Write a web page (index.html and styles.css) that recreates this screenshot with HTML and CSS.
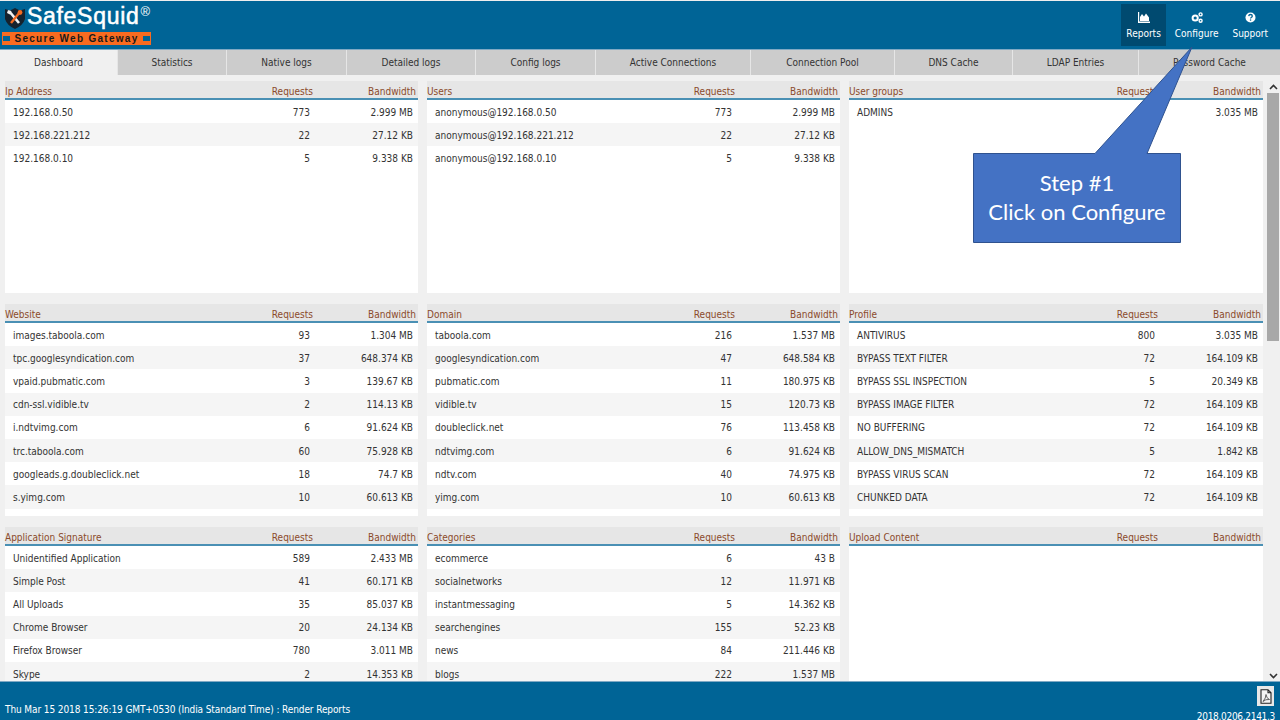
FILE: index.html
```html
<!DOCTYPE html>
<html>
<head>
<meta charset="utf-8">
<title>SafeSquid Reports</title>
<link rel="stylesheet" href="styles.css">
</head>
<body>

<div class="header">
  <div class="logo">
    <div class="logo-top">
      <svg class="shield" width="20" height="21" viewBox="0 0 20 21">
        <path d="M0 1 L5 2.500 L10 0 L15 2.500 L20 1 L20 11 Q18 17.500 10 21 Q2 17.500 0 11 Z" fill="#16222e"/>
        <path d="M4 3 L14 15" stroke="#f2f2f2" stroke-width="2.600"/>
        <path d="M3 2 L6.500 3.500 L5 6.500 L2 5 Z" fill="#f2f2f2"/>
        <path d="M15 4 L6 15" stroke="#f26a21" stroke-width="2.400"/>
        <circle cx="15" cy="4.500" r="2.400" fill="#f26a21"/>
      </svg>
      <span class="logo-name">SafeSquid</span><span class="logo-reg">&reg;</span>
    </div>
    <div class="logo-tag"><span class="tag-end"></span><span class="tag-text">Secure Web Gateway</span><span class="tag-end"></span></div>
  </div>
  <div class="topnav">
    <div class="topnav-item active">
      <svg width="12" height="11" viewBox="0 0 12 11"><path d="M0 0 H1.200 V9.600 H12 V11 H0 Z M2 9 V5 L4 2 L6 4.500 L8 1.500 L11 5.500 V9 Z" fill="#fff"/></svg>
      <span>Reports</span>
    </div>
    <div class="topnav-item">
      <svg width="12" height="11" viewBox="0 0 12 11"><circle cx="4.200" cy="6" r="2.600" fill="none" stroke="#fff" stroke-width="2"/><circle cx="9.600" cy="2.400" r="1.500" fill="none" stroke="#fff" stroke-width="1.400"/><circle cx="9.600" cy="8.800" r="1.500" fill="none" stroke="#fff" stroke-width="1.400"/></svg>
      <span>Configure</span>
    </div>
    <div class="topnav-item">
      <svg width="11" height="11" viewBox="0 0 11 11"><circle cx="5.500" cy="5.500" r="5" fill="#fff"/><path d="M3.700 4.200 Q3.900 2.500 5.500 2.500 Q7.300 2.500 7.300 4 Q7.300 5 6.200 5.500 Q5.600 5.800 5.600 6.600" fill="none" stroke="#006496" stroke-width="1.300"/><rect x="4.900" y="7.400" width="1.300" height="1.300" fill="#006496"/></svg>
      <span>Support</span>
    </div>
  </div>
</div>

<div class="tabs">
  <div class="tab active t1">Dashboard</div>
  <div class="tab t2">Statistics</div>
  <div class="tab t3">Native logs</div>
  <div class="tab t4">Detailed logs</div>
  <div class="tab t5">Config logs</div>
  <div class="tab t6">Active Connections</div>
  <div class="tab t7">Connection Pool</div>
  <div class="tab t8">DNS Cache</div>
  <div class="tab t9">LDAP Entries</div>
  <div class="tab t10">Password Cache</div>
</div>

<div class="content">
  <div class="panels">

    <div class="panel">
      <div class="row head"><span>Ip Address</span><span>Requests</span><span>Bandwidth</span></div>
      <div class="body">
        <div class="row"><span>192.168.0.50</span><span>773</span><span>2.999 MB</span></div>
        <div class="row"><span>192.168.221.212</span><span>22</span><span>27.12 KB</span></div>
        <div class="row"><span>192.168.0.10</span><span>5</span><span>9.338 KB</span></div>
      </div>
    </div>

    <div class="panel">
      <div class="row head"><span>Users</span><span>Requests</span><span>Bandwidth</span></div>
      <div class="body">
        <div class="row"><span>anonymous@192.168.0.50</span><span>773</span><span>2.999 MB</span></div>
        <div class="row"><span>anonymous@192.168.221.212</span><span>22</span><span>27.12 KB</span></div>
        <div class="row"><span>anonymous@192.168.0.10</span><span>5</span><span>9.338 KB</span></div>
      </div>
    </div>

    <div class="panel">
      <div class="row head"><span>User groups</span><span>Requests</span><span>Bandwidth</span></div>
      <div class="body">
        <div class="row"><span>ADMINS</span><span>800</span><span>3.035 MB</span></div>
      </div>
    </div>

    <div class="panel">
      <div class="row head"><span>Website</span><span>Requests</span><span>Bandwidth</span></div>
      <div class="body">
        <div class="row"><span>images.taboola.com</span><span>93</span><span>1.304 MB</span></div>
        <div class="row"><span>tpc.googlesyndication.com</span><span>37</span><span>648.374 KB</span></div>
        <div class="row"><span>vpaid.pubmatic.com</span><span>3</span><span>139.67 KB</span></div>
        <div class="row"><span>cdn-ssl.vidible.tv</span><span>2</span><span>114.13 KB</span></div>
        <div class="row"><span>i.ndtvimg.com</span><span>6</span><span>91.624 KB</span></div>
        <div class="row"><span>trc.taboola.com</span><span>60</span><span>75.928 KB</span></div>
        <div class="row"><span>googleads.g.doubleclick.net</span><span>18</span><span>74.7 KB</span></div>
        <div class="row"><span>s.yimg.com</span><span>10</span><span>60.613 KB</span></div>
      </div>
    </div>

    <div class="panel">
      <div class="row head"><span>Domain</span><span>Requests</span><span>Bandwidth</span></div>
      <div class="body">
        <div class="row"><span>taboola.com</span><span>216</span><span>1.537 MB</span></div>
        <div class="row"><span>googlesyndication.com</span><span>47</span><span>648.584 KB</span></div>
        <div class="row"><span>pubmatic.com</span><span>11</span><span>180.975 KB</span></div>
        <div class="row"><span>vidible.tv</span><span>15</span><span>120.73 KB</span></div>
        <div class="row"><span>doubleclick.net</span><span>76</span><span>113.458 KB</span></div>
        <div class="row"><span>ndtvimg.com</span><span>6</span><span>91.624 KB</span></div>
        <div class="row"><span>ndtv.com</span><span>40</span><span>74.975 KB</span></div>
        <div class="row"><span>yimg.com</span><span>10</span><span>60.613 KB</span></div>
      </div>
    </div>

    <div class="panel">
      <div class="row head"><span>Profile</span><span>Requests</span><span>Bandwidth</span></div>
      <div class="body">
        <div class="row"><span>ANTIVIRUS</span><span>800</span><span>3.035 MB</span></div>
        <div class="row"><span>BYPASS TEXT FILTER</span><span>72</span><span>164.109 KB</span></div>
        <div class="row"><span>BYPASS SSL INSPECTION</span><span>5</span><span>20.349 KB</span></div>
        <div class="row"><span>BYPASS IMAGE FILTER</span><span>72</span><span>164.109 KB</span></div>
        <div class="row"><span>NO BUFFERING</span><span>72</span><span>164.109 KB</span></div>
        <div class="row"><span>ALLOW_DNS_MISMATCH</span><span>5</span><span>1.842 KB</span></div>
        <div class="row"><span>BYPASS VIRUS SCAN</span><span>72</span><span>164.109 KB</span></div>
        <div class="row"><span>CHUNKED DATA</span><span>72</span><span>164.109 KB</span></div>
      </div>
    </div>

    <div class="panel">
      <div class="row head"><span>Application Signature</span><span>Requests</span><span>Bandwidth</span></div>
      <div class="body">
        <div class="row"><span>Unidentified Application</span><span>589</span><span>2.433 MB</span></div>
        <div class="row"><span>Simple Post</span><span>41</span><span>60.171 KB</span></div>
        <div class="row"><span>All Uploads</span><span>35</span><span>85.037 KB</span></div>
        <div class="row"><span>Chrome Browser</span><span>20</span><span>24.134 KB</span></div>
        <div class="row"><span>Firefox Browser</span><span>780</span><span>3.011 MB</span></div>
        <div class="row"><span>Skype</span><span>2</span><span>14.353 KB</span></div>
      </div>
    </div>

    <div class="panel">
      <div class="row head"><span>Categories</span><span>Requests</span><span>Bandwidth</span></div>
      <div class="body">
        <div class="row"><span>ecommerce</span><span>6</span><span>43 B</span></div>
        <div class="row"><span>socialnetworks</span><span>12</span><span>11.971 KB</span></div>
        <div class="row"><span>instantmessaging</span><span>5</span><span>14.362 KB</span></div>
        <div class="row"><span>searchengines</span><span>155</span><span>52.23 KB</span></div>
        <div class="row"><span>news</span><span>84</span><span>211.446 KB</span></div>
        <div class="row"><span>blogs</span><span>222</span><span>1.537 MB</span></div>
      </div>
    </div>

    <div class="panel">
      <div class="row head"><span>Upload Content</span><span>Requests</span><span>Bandwidth</span></div>
      <div class="body"></div>
    </div>

  </div>
  <div class="scrollbar">
    <svg class="arrow" width="9" height="6" viewBox="0 0 9 6"><path d="M1 5 L4.500 1.500 L8 5" fill="none" stroke="#333" stroke-width="1.600"/></svg>
    <div class="track"><div class="thumb"></div></div>
    <svg class="arrow" width="9" height="6" viewBox="0 0 9 6"><path d="M1 1 L4.500 4.500 L8 1" fill="none" stroke="#333" stroke-width="1.600"/></svg>
  </div>
</div>

<div class="footer">
  <div class="status">Thu Mar 15 2018 15:26:19 GMT+0530 (India Standard Time) : Render Reports</div>
  <div class="footer-right">
    <div class="pdf">
      <svg width="12" height="15" viewBox="0 0 12 15"><path d="M1 .7 H8 L11 3.700 V14.300 H1 Z M8 .7 V3.700 H11" fill="#f4f4f4" stroke="#222" stroke-width="1.100"/><path d="M3 12.500 Q6 9 6 5.500 Q6.500 9.500 9.500 10.500 Q5.500 10 3 12.500 Z" fill="none" stroke="#555" stroke-width=".9"/></svg>
    </div>
    <div class="version">2018.0206.2141.3</div>
  </div>
</div>

<svg class="callout-shape" width="1280" height="720" viewBox="0 0 1280 720">
  <path d="M973.500 153.500 H1095 L1192 47 L1147 153.500 H1180.500 V242.500 H973.500 Z" fill="#4472c4" stroke="#2f528f"/>
</svg>
<div class="callout-text">Step #1<br>Click on Configure</div>

</body>
</html>
```

FILE: styles.css
```css
/* SafeSquid reports dashboard */

html, body
{ margin: 0;
height: 100%;
overflow: hidden;
}

body
{ display: flex;
flex-direction: column;
font-family: "DejaVu Sans Condensed", "DejaVu Sans", sans-serif;
font-size: 10px;
color: #333;
background-color: #f0f0f0;
}

div.header
{ flex: none;
display: flex;
justify-content: space-between;
height: 48px;
border-top: 1px solid #eee;
border-bottom: 1px solid #7fa9c4;
background-color: #006496;
}

div.logo
{ padding: 0 0 0 2px;
width: 160px;
}

div.logo-top
{ display: flex;
align-items: flex-start;
height: 31px;
}

svg.shield
{ flex: none;
margin: 7px 2px 0 3px;
}

span.logo-name
{ font-family: "Liberation Sans", sans-serif;
font-size: 23px;
letter-spacing: .7px;
-webkit-text-stroke: .5px #fff;
color: #fff;
line-height: 30px;
}

span.logo-reg
{ margin: 4px 0 0 1px;
font-family: "Liberation Sans", sans-serif;
font-size: 13px;
color: #fff;
line-height: 14px;
}

div.logo-tag
{ display: flex;
align-items: center;
justify-content: space-between;
box-sizing: border-box;
width: 149px;
height: 13px;
padding: 0 1px;
background-color: #f96b20;
}

span.tag-end
{ width: 7px;
height: 5px;
background-color: #006496;
}

span.tag-text
{ font-family: "Liberation Sans", sans-serif;
font-size: 10px;
font-weight: bold;
letter-spacing: 1.280px;
color: #1a1a1a;
white-space: nowrap;
}

div.topnav
{ display: flex;
align-items: flex-start;
gap: 4px;
padding: 3px 7px 0 0;
}

div.topnav-item
{ display: flex;
flex-direction: column;
align-items: center;
justify-content: center;
gap: 5px;
height: 42px;
padding: 0 5px;
color: #fff;
font-size: 10px;
}

div.topnav-item.active
{ background-color: #004a70;
}

div.tabs
{ flex: none;
display: flex;
height: 25px;
background-color: #f0f0f0;
}

div.tab
{ flex: none;
box-sizing: border-box;
height: 25px;
line-height: 25px;
text-align: center;
background-color: #cccccc;
border-right: 1px solid #e6e6e6;
color: #333;
}

div.tab.active
{ background-color: #f0f0f0;
}

.t1 { width: 118px; }
.t2 { width: 109px; }
.t3 { width: 120px; }
.t4 { width: 129px; }
.t5 { width: 120px; }
.t6 { width: 155px; }
.t7 { width: 144px; }
.t8 { width: 118px; }
.t9 { width: 126px; }
.t10 { width: 141px; border-right: 0 !important; }

div.content
{ flex: 1;
display: flex;
min-height: 0;
overflow: hidden;
}

div.panels
{ flex: 1;
display: grid;
grid-template-columns: 413px 413px 414px;
grid-auto-rows: 212px;
column-gap: 9px;
row-gap: 11px;
padding: 6px 0 0 5px;
overflow: hidden;
}

div.row
{ display: grid;
grid-template-columns: 1fr 90px 103px;
align-items: center;
box-sizing: border-box;
height: 23.2px;
padding-top: 1px;
}

div.row span
{ padding-right: 5px;
text-align: right;
white-space: nowrap;
}

div.row span:first-child
{ padding-left: 8px;
text-align: left;
}

div.row.head
{ height: 19px;
padding-top: 3px;
background-color: #e6e6e6;
border-bottom: 2px solid #4a90b4;
color: #8b4a2b;
}

div.row.head span
{ padding-right: 2px;
}

div.row.head span:first-child
{ padding-left: 0;
}

div.body
{ height: 193px;
background-color: #fff;
}

div.body div.row:nth-child(even)
{ background-color: #f5f5f5;
}

div.scrollbar
{ flex: none;
display: flex;
flex-direction: column;
align-items: center;
box-sizing: border-box;
width: 14px;
margin-top: 6px;
background-color: #f0f0f0;
}

svg.arrow
{ flex: none;
margin: 3px 0 2px;
}

div.track
{ flex: 1;
width: 100%;
margin: 1px 0;
}

div.thumb
{ width: 12px;
margin-left: 1px;
height: 248px;
background-color: #a8a8a8;
}

div.footer
{ flex: none;
display: flex;
justify-content: space-between;
box-sizing: border-box;
height: 39px;
border-top: 1px solid #7fa9c4;
background-color: #006496;
color: #fff;
overflow: hidden;
}

div.status
{ align-self: flex-end;
padding: 0 0 5px 5px;
letter-spacing: -.1px;
}

div.footer-right
{ display: flex;
flex-direction: column;
align-items: flex-end;
padding: 4px 5px 0 0;
}

div.pdf
{ flex: none;
display: flex;
align-items: center;
justify-content: center;
width: 17px;
height: 20px;
margin-right: 1px;
background-color: #e8e8e8;
}

div.version
{ flex: none;
margin-top: 5px;
line-height: 12px;
letter-spacing: -.3px;
white-space: nowrap;
}

svg.callout-shape
{ position: absolute;
left: 0;
top: 0;
pointer-events: none;
}

div.callout-text
{ position: absolute;
left: 973px;
top: 168px;
width: 208px;
text-align: center;
font-family: Lato, sans-serif;
font-size: 22px;
line-height: 29px;
color: #fff;
}
```
